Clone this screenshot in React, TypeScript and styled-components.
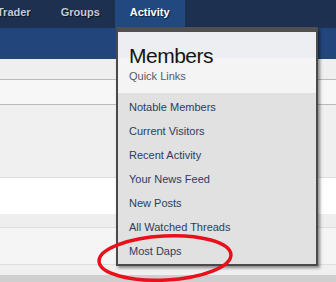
import React from "react";
import styled, { createGlobalStyle } from "styled-components";

const GlobalStyle = createGlobalStyle`
  html, body {
    margin: 0;
    padding: 0;
    overflow: hidden;
    background: #f0f0f0;
  }
  body {
    font-family: "Liberation Sans", Arial, sans-serif;
  }
`;

const menuLinks = [
  "Notable Members",
  "Current Visitors",
  "Recent Activity",
  "Your News Feed",
  "New Posts",
  "All Watched Threads",
  "Most Daps",
];

const rows = [
  { h: 20, bg: "#efefef", line: "#bbbbbb" },
  { h: 24, bg: "#f7f7f7", line: "#bbbbbb" },
  { h: 72, bg: "#f0f0f0", line: "#dddddd" },
  { h: 35, bg: "#ffffff", line: "#ffffff" },
  { h: 13, bg: "#eeeeee", line: "#dddddd" },
  { h: 36, bg: "#f5f5f5", line: "#dddddd" },
  { h: 9, bg: "#f0f0f0", line: "#f0f0f0" },
  { h: 20, bg: "#cfcfcf", line: "#cfcfcf" },
];

const App: React.FC = () => {
  return (
    <>
      <GlobalStyle />
      <Page>
        <Nav>
          <Tab>Trader</Tab>
          <Tab>Groups</Tab>
          <Tab $active>Activity</Tab>
        </Nav>
        <SubBar />
        {rows.map((r, i) => (
          <Row key={i} $h={r.h} $bg={r.bg} $line={r.line} />
        ))}

        <Menu>
          <MenuHeader>
            <MenuTitle>Members</MenuTitle>
            <MenuSub>Quick Links</MenuSub>
          </MenuHeader>
          <MenuList>
            {menuLinks.map((l) => (
              <MenuItem key={l}>{l}</MenuItem>
            ))}
          </MenuList>
        </Menu>

        <Oval width="150" height="60" viewBox="0 0 150 60">
          <ellipse
            cx="70"
            cy="29"
            rx="66"
            ry="22"
            fill="none"
            stroke="#e8101a"
            strokeWidth="3.5"
            transform="rotate(-3 70 29)"
          />
        </Oval>
      </Page>
    </>
  );
};

export default App;

const Page = styled.div`
  position: relative;
  width: 336px;
  height: 282px;
  overflow: hidden;
  display: flex;
  flex-direction: column;
`;

const Nav = styled.div`
  height: 28px;
  flex-shrink: 0;
  background: #1e304f;
  display: flex;
  margin-left: -18px;
`;

const Tab = styled.div<{ $active?: boolean }>`
  padding: 0 15px;
  height: 28px;
  line-height: 25px;
  font-family: "Liberation Sans", Arial, sans-serif;
  font-weight: 700;
  font-size: 11px;
  color: ${(p) => (p.$active ? "#ffffff" : "#c3cad5")};
  background: ${(p) => (p.$active ? "#22497f" : "transparent")};
  text-shadow: 1px 1px 1px rgba(0, 0, 0, 0.6);
`;

const SubBar = styled.div`
  height: 31px;
  flex-shrink: 0;
  background: #22467c;
`;

const Row = styled.div<{ $h: number; $bg: string; $line: string }>`
  height: ${(p) => p.$h}px;
  flex-shrink: 0;
  background: ${(p) => p.$bg};
  border-bottom: 1px solid ${(p) => p.$line};
`;

const Menu = styled.div`
  position: absolute;
  left: 116px;
  top: 27px;
  width: 198px;
  border: 2px solid #4a4a4a;
  border-top: 5px solid #505050;
  border-bottom: 2px solid #4a4a4a;
  background: #e1e1e1;
  box-shadow: 2px 2px 3px rgba(0, 0, 0, 0.45);
`;

const MenuHeader = styled.div`
  padding: 11px 11px 10px;
  background: linear-gradient(#edeef1 0, #edeef1 26px, #f4f4f4 26px);
`;

const MenuTitle = styled.div`
  font-size: 21px;
  line-height: 26px;
  letter-spacing: -0.5px;
  color: #141414;
`;

const MenuSub = styled.div`
  font-size: 11px;
  line-height: 14px;
  color: #555a6b;
`;

const MenuList = styled.div`
  padding: 2px 0 1px;
`;

const MenuItem = styled.div`
  padding: 0 11px;
  font-size: 11px;
  line-height: 24px;
  color: #2d3c5e;
`;

const Oval = styled.svg`
  position: absolute;
  left: 95px;
  top: 229px;
  overflow: visible;
`;
